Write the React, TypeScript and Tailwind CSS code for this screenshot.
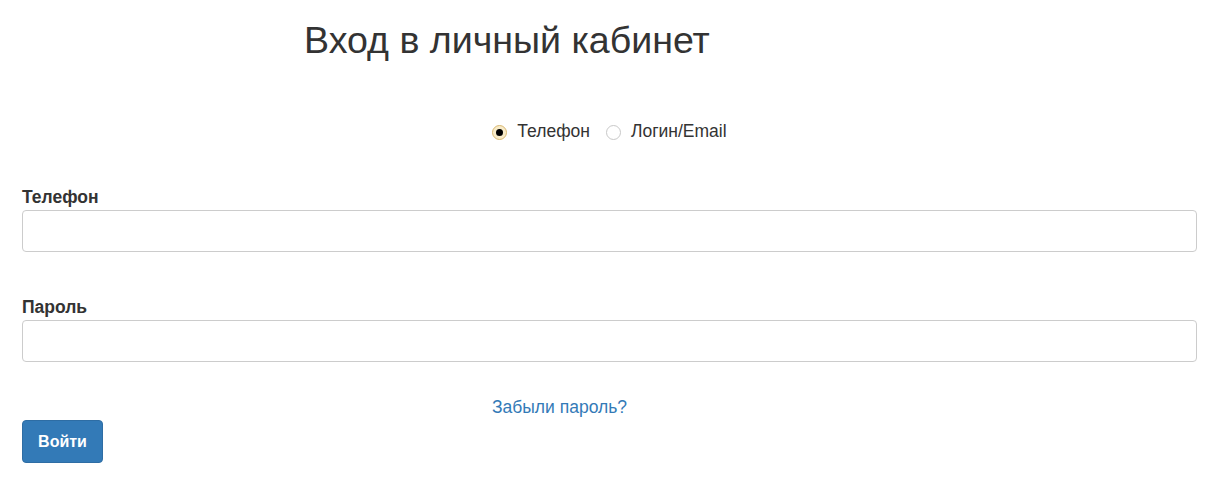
import React from "react";

export default function App() {
  return (
    <div className="w-[1213px] h-[496px] bg-white text-[#333] font-['Liberation_Sans',Arial,sans-serif]">
      <div className="pl-[22px] pr-[16px]">
        <h1 className="pl-[282px] pt-[14px] text-[37.6px] leading-[52px] font-normal">Вход в личный кабинет</h1>
        <div className="mt-[54px] h-[22px] flex justify-center items-center gap-[16px] text-[17.5px]">
          <label className="flex items-center gap-[10px]">
            <span className="mt-[2px] w-[15px] h-[15px] rounded-full border border-[#d9b872] bg-[#f8ebc8] flex items-center justify-center">
              <span className="w-[7px] h-[7px] rounded-full bg-black" />
            </span>
            Телефон
          </label>
          <label className="flex items-center gap-[10px]">
            <span className="mt-[2px] w-[15px] h-[15px] rounded-full border border-[#c8c8c8] bg-white" />
            Логин/Email
          </label>
        </div>
        <div className="mt-[44px]">
          <div className="text-[17.5px] font-bold leading-[22px]">Телефон</div>
          <div className="mt-[2px] h-[42px] rounded-[4px] border border-[#ccc]" />
        </div>
        <div className="mt-[44px]">
          <div className="text-[17.5px] font-bold leading-[22px]">Пароль</div>
          <div className="mt-[2px] h-[42px] rounded-[4px] border border-[#ccc]" />
        </div>
        <div className="mt-[34px] h-[22px] text-center text-[17.5px] text-[#337ab7] pr-[100px] leading-[22px]">Забыли пароль?</div>
        <button className="mt-[2px] w-[81px] h-[43px] rounded-[4px] bg-[#337ab7] border border-[#2e6da4] text-white text-[16px] font-bold">Войти</button>
      </div>
    </div>
  );
}
